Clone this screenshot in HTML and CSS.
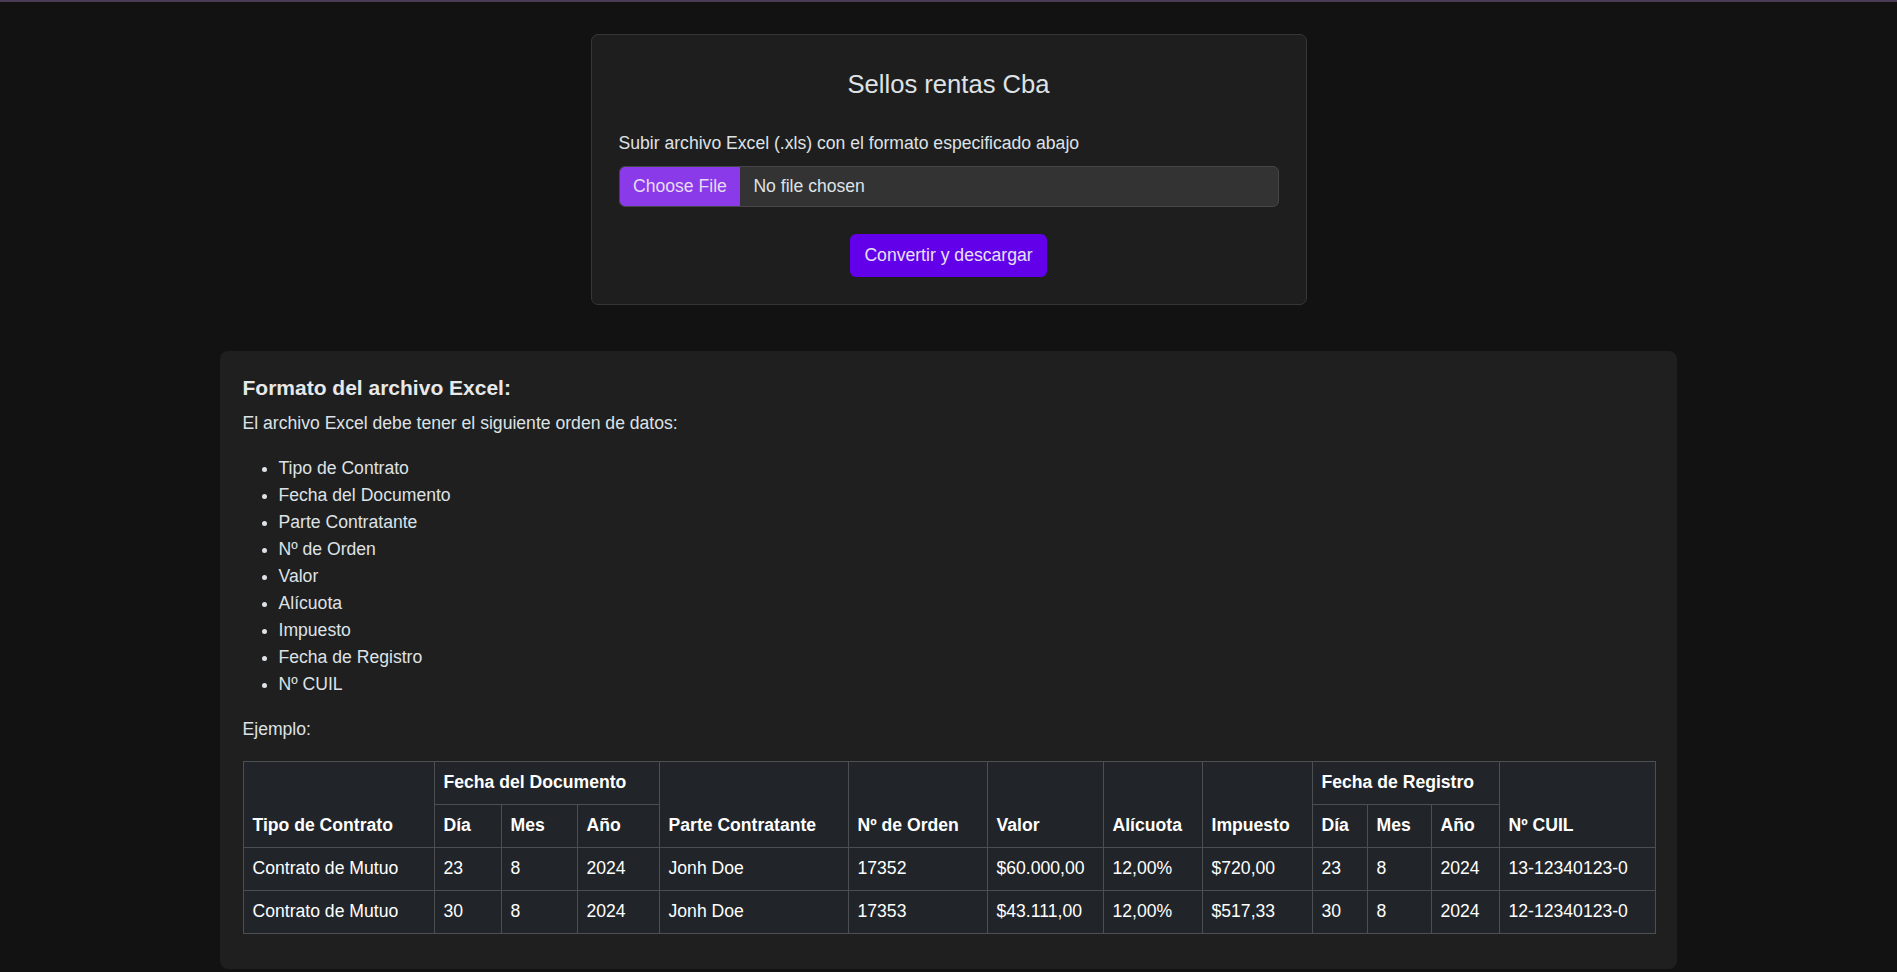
FILE: index.html
```html
<!DOCTYPE html>
<html lang="es">
<head>
<meta charset="utf-8">
<title>Sellos rentas Cba</title>
<link rel="stylesheet" href="styles.css">
</head>
<body>
<div class="topline"></div>
<main class="page">
  <section class="upload-card">
    <h1 class="title">Sellos rentas Cba</h1>
    <label class="field-label">Subir archivo Excel (.xls) con el formato especificado abajo</label>
    <div class="file-input">
      <span class="file-btn">Choose File</span>
      <span class="file-name">No file chosen</span>
    </div>
    <button class="submit" type="button">Convertir y descargar</button>
  </section>

  <section class="info-card">
    <h2 class="info-title">Formato del archivo Excel:</h2>
    <p class="text">El archivo Excel debe tener el siguiente orden de datos:</p>
    <ul class="fields">
      <li>Tipo de Contrato</li>
      <li>Fecha del Documento</li>
      <li>Parte Contratante</li>
      <li>Nº de Orden</li>
      <li>Valor</li>
      <li>Alícuota</li>
      <li>Impuesto</li>
      <li>Fecha de Registro</li>
      <li>Nº CUIL</li>
    </ul>
    <p class="text">Ejemplo:</p>
    <table class="example">
      <colgroup>
        <col class="w1"><col class="w2"><col class="w3"><col class="w4"><col class="w5"><col class="w6"><col class="w7">
        <col class="w8"><col class="w9"><col class="w10"><col class="w11"><col class="w12"><col class="w13">
      </colgroup>
      <thead>
        <tr>
          <th rowspan="2">Tipo de Contrato</th>
          <th colspan="3">Fecha del Documento</th>
          <th rowspan="2">Parte Contratante</th>
          <th rowspan="2">Nº de Orden</th>
          <th rowspan="2">Valor</th>
          <th rowspan="2">Alícuota</th>
          <th rowspan="2">Impuesto</th>
          <th colspan="3">Fecha de Registro</th>
          <th rowspan="2">Nº CUIL</th>
        </tr>
        <tr>
          <th>Día</th><th>Mes</th><th>Año</th>
          <th>Día</th><th>Mes</th><th>Año</th>
        </tr>
      </thead>
      <tbody>
        <tr>
          <td>Contrato de Mutuo</td><td>23</td><td>8</td><td>2024</td><td>Jonh Doe</td><td>17352</td>
          <td>$60.000,00</td><td>12,00%</td><td>$720,00</td><td>23</td><td>8</td><td>2024</td><td>13-12340123-0</td>
        </tr>
        <tr>
          <td>Contrato de Mutuo</td><td>30</td><td>8</td><td>2024</td><td>Jonh Doe</td><td>17353</td>
          <td>$43.111,00</td><td>12,00%</td><td>$517,33</td><td>30</td><td>8</td><td>2024</td><td>12-12340123-0</td>
        </tr>
      </tbody>
    </table>
  </section>
</main>
</body>
</html>
```
FILE: styles.css
```css
html, body {
  margin: 0;
  background: #121212;
}
body {
  font-family: "Liberation Sans", Arial, sans-serif;
  font-size: 17.6px;
  line-height: 27px;
  color: #dee2e6;
}
.topline {
  height: 2px;
  background: #4a3b55;
}
.page {
  display: flex;
  flex-direction: column;
  align-items: center;
  gap: 46px;
  padding-top: 32px;
}

/* Upload card */
.upload-card {
  box-sizing: border-box;
  width: 716px;
  padding: 27px;
  background: #1e1e1e;
  border: 1px solid #363636;
  border-radius: 7px;
}
.title {
  margin: 6px 0 30px;
  font-size: 25.6px;
  line-height: 32px;
  font-weight: 400;
  text-align: center;
  color: #dee2e6;
}
.field-label {
  display: block;
  margin-bottom: 9px;
}
.file-input {
  display: flex;
  box-sizing: border-box;
  height: 41px;
  margin-bottom: 27px;
  background: #333333;
  border: 1px solid #464646;
  border-radius: 6px;
  overflow: hidden;
}
.file-btn {
  display: flex;
  align-items: center;
  padding: 0 13.5px;
  background: #8a3ae8;
  color: #e6dcf5;
}
.file-name {
  display: flex;
  align-items: center;
  padding-left: 13px;
  color: #dee2e6;
}
.submit {
  display: block;
  margin: 0 auto;
  height: 43px;
  padding: 0 14px;
  border: 0;
  border-radius: 6px;
  background: #6200ea;
  color: #e8e0f6;
  font: inherit;
  line-height: 27px;
}

/* Info card */
.info-card {
  box-sizing: border-box;
  width: 1457px;
  padding: 22.5px 22.5px 22px;
  background: #1f1f1f;
  border-radius: 8px;
}
.info-title {
  margin: 0 0 9px;
  font-size: 21px;
  line-height: 27px;
  font-weight: 700;
  color: #e6e8ea;
}
.text {
  margin: 0 0 18px;
}
.fields {
  margin: 0 0 18px;
  padding-left: 36px;
}

/* Example table */
.example {
  width: 100%;
  table-layout: fixed;
  border-collapse: collapse;
  background: #212529;
  color: #ffffff;
  margin-bottom: 13px;
}
.example th,
.example td {
  border: 1px solid #4b4f52;
  padding: 7.5px 9px;
  text-align: left;
  white-space: nowrap;
}
.example th {
  font-weight: 700;
  vertical-align: bottom;
}
.example td {
  vertical-align: top;
}
.w1 { width: 191px; }
.w2 { width: 67px; }
.w3 { width: 76px; }
.w4 { width: 82px; }
.w5 { width: 189px; }
.w6 { width: 139px; }
.w7 { width: 116px; }
.w8 { width: 99px; }
.w9 { width: 110px; }
.w10 { width: 55px; }
.w11 { width: 64px; }
.w12 { width: 68px; }
.w13 { width: 156px; }
```
